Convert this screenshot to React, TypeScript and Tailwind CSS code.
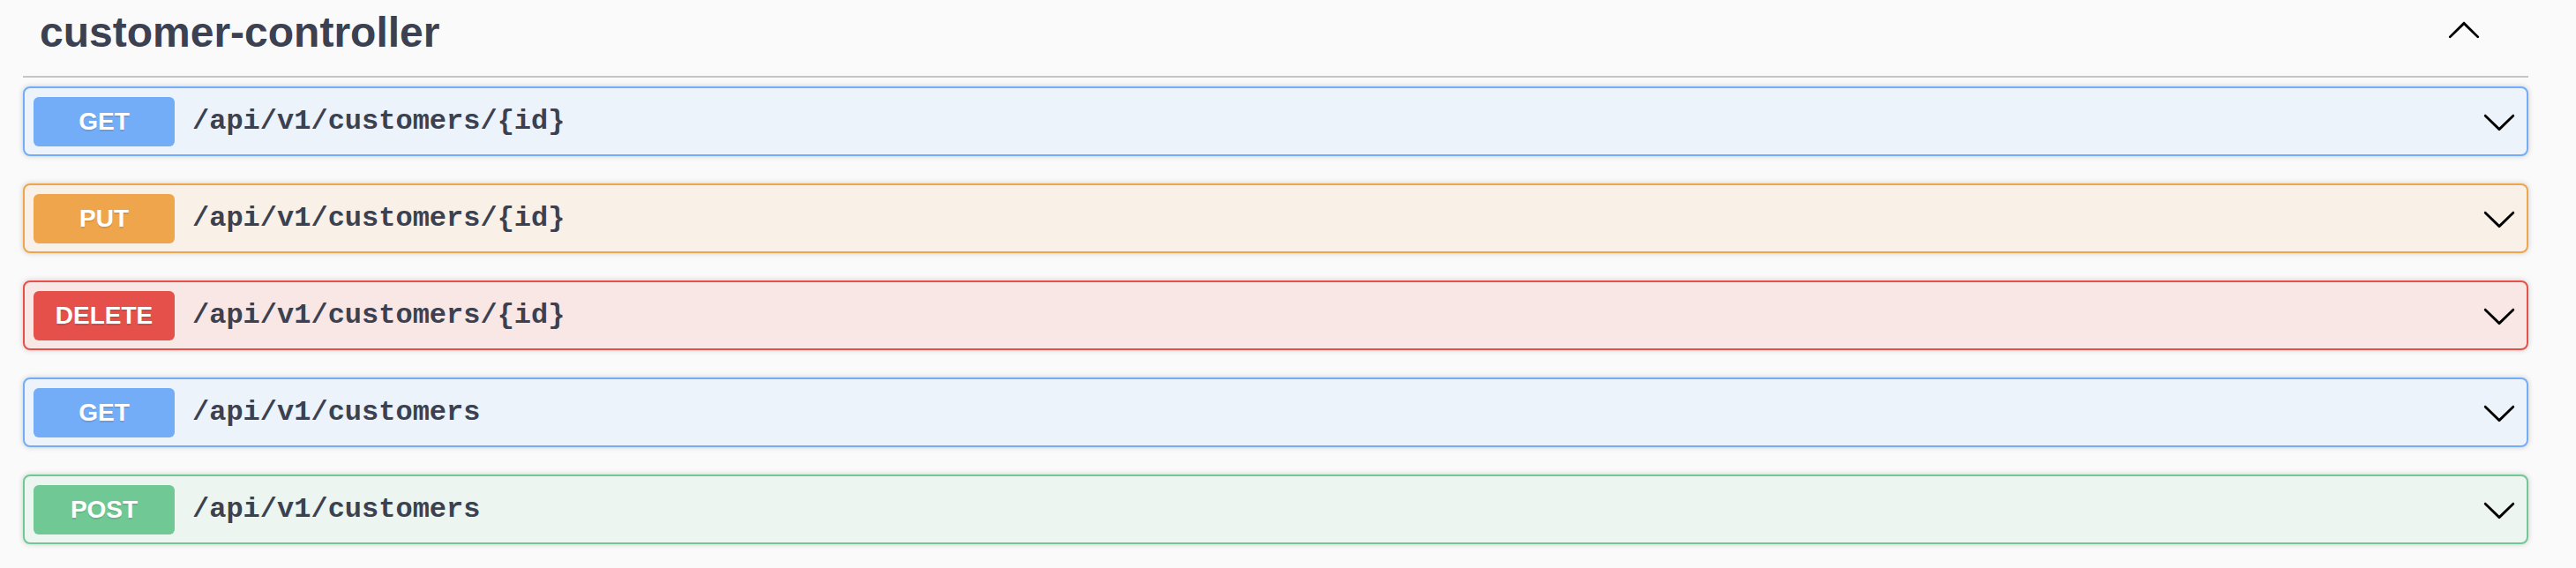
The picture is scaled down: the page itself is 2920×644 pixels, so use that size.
import React from "react";

const ARROW_DOWN =
  "M17.418 6.109c.272-.268.709-.268.979 0s.271.701 0 .969l-7.908 7.83c-.27.268-.707.268-.979 0l-7.908-7.83c-.27-.268-.27-.701 0-.969.271-.268.709-.268.979 0L10 13.25l7.418-7.141z";
const ARROW_UP =
  "M17.418 14.908c.272.268.709.268.979 0s.271-.701 0-.969l-7.908-7.83c-.27-.268-.707-.268-.979 0l-7.908 7.83c-.27.268-.27.701 0 .969.271.268.709.268.979 0L10 7.767l7.418 7.141z";

type Op = {
  method: string;
  path: string;
  block: string;
  badge: string;
};

const ops: Op[] = [
  {
    method: "GET",
    path: "/api/v1/customers/{id}",
    block: "border-[#73adf7] bg-[#ecf3fb]",
    badge: "bg-[#73adf7]",
  },
  {
    method: "PUT",
    path: "/api/v1/customers/{id}",
    block: "border-[#efa54b] bg-[#f9f0e7]",
    badge: "bg-[#efa54b]",
  },
  {
    method: "DELETE",
    path: "/api/v1/customers/{id}",
    block: "border-[#e5504a] bg-[#f9e7e6]",
    badge: "bg-[#e5504a]",
  },
  {
    method: "GET",
    path: "/api/v1/customers",
    block: "border-[#73adf7] bg-[#ecf3fb]",
    badge: "bg-[#73adf7]",
  },
  {
    method: "POST",
    path: "/api/v1/customers",
    block: "border-[#70c894] bg-[#ecf5ef]",
    badge: "bg-[#70c894]",
  },
];

function Arrow({ d, className }: { d: string; className?: string }) {
  return (
    <svg viewBox="0 0 20 20" className={className} aria-hidden="true">
      <path d={d} fill="#000" />
    </svg>
  );
}

function OpBlock({ op }: { op: Op }) {
  return (
    <div
      className={`flex h-[79px] items-center rounded-[8px] border-2 pl-[10px] pr-[11px] shadow-[0_0_6px_rgba(0,0,0,0.19)] ${op.block}`}
    >
      <div
        className={`flex h-[56px] w-[160px] shrink-0 items-center justify-center rounded-[6px] text-[28px] font-bold leading-none text-white [text-shadow:0_2px_0_rgba(0,0,0,0.1)] ${op.badge}`}
      >
        {op.method}
      </div>
      <div className="ml-[20px] flex-1 font-['Liberation_Mono','Courier_New',monospace] text-[32px] font-bold leading-[36px] text-[#3b4151]">
        {op.path}
      </div>
      <Arrow d={ARROW_DOWN} className="h-10 w-10 shrink-0" />
    </div>
  );
}

export default function App() {
  return (
    <div className="min-h-[644px] w-full bg-[#fafafa] font-['Liberation_Sans',Arial,sans-serif]">
      <div className="ml-[26px] mr-[54px]">
        <div className="flex h-[88px] border-b-2 border-[#c4c5c9] pl-[19px] pr-[53px]">
          <h3 className="mt-[13px] flex-1 text-[48px] font-bold leading-[48px] text-[#3b4151]">
            customer-controller
          </h3>
          <Arrow d={ARROW_UP} className="mt-[13px] h-10 w-10 shrink-0" />
        </div>
        <div className="mt-[10px] flex flex-col gap-[31px]">
          {ops.map((op, i) => (
            <OpBlock key={i} op={op} />
          ))}
        </div>
      </div>
    </div>
  );
}
